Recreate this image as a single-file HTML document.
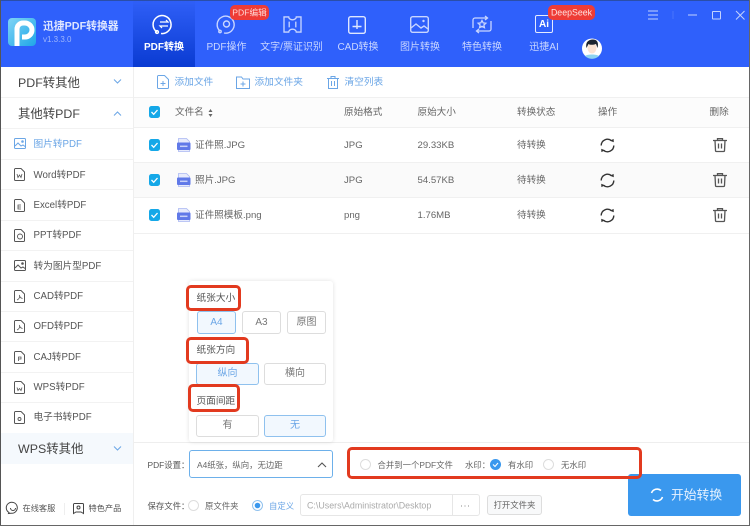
<!DOCTYPE html>
<html lang="zh"><head><meta charset="utf-8"><title>迅捷PDF转换器</title>
<style>
*{box-sizing:border-box;margin:0;padding:0}
html,body{width:750px;height:526px;overflow:hidden;background:#fff}
body{position:relative;font-family:"Liberation Sans","Noto Sans CJK SC",sans-serif;color:#555}
.a{position:absolute;white-space:nowrap}
.t{position:absolute;white-space:nowrap;transform:translate(0,calc(-50% + 1px));line-height:1}
.c{position:absolute;white-space:nowrap;transform:translate(-50%,calc(-50% + 1px));line-height:1}
svg{position:absolute;overflow:visible}
.nav{font-size:10px;color:#c9d6ff}
.side{font-size:9.7px;color:#555}
.group{font-size:12.4px;color:#444}
.th{font-size:9.6px;color:#666}
.td{font-size:9.6px;color:#666}
.sm{font-size:8.4px;color:#666}
.btn{position:absolute;border:1px solid #ddd;border-radius:3px;background:#fff;font-size:10px;line-height:1;color:#777;display:flex;align-items:center;justify-content:center}
.on{border-color:#8fc1ee;background:#f2f8fe;color:#6ba6e6}
.red{position:absolute;border:3px solid #e23a1f;border-radius:5px}
.hl{position:absolute;left:1px;width:132px;height:1px;background:#f2f2f2}
.rl{position:absolute;left:134px;width:616px;height:1px;background:#f0f0f0}
.radio{position:absolute;width:11px;height:11px;border:1px solid #ddd;border-radius:50%;background:#fff}
</style></head><body>

<!-- header -->
<div class="a" style="left:0;top:0;width:750px;height:67px;background:#2f60fb;border-top:1px solid #2a4ea8"></div>
<div class="a" style="left:133px;top:1px;width:62px;height:66px;background:linear-gradient(#2f5ff7,#0a3bd2)"></div>

<!-- logo -->
<div class="a" style="left:8px;top:18px;width:28px;height:28px;border-radius:4px;background:linear-gradient(135deg,#7fd4f5,#1fa6e8)"></div>
<svg style="left:8px;top:18px" width="28" height="28" viewBox="0 0 28 28"><path d="M9 28V11a6 6 0 0 1 6-6h2a7 7 0 0 1 0 14h-3" fill="none" stroke="#fff" stroke-width="5"/></svg>
<div class="t" style="left:43px;top:26px;font-size:10.8px;font-weight:bold;color:#dfe7ff">迅捷PDF转换器</div>
<div class="t" style="left:43px;top:39px;font-size:8px;color:#9fb6fb">v1.3.3.0</div>

<!-- nav icons -->
<svg style="left:154px;top:14px" width="20" height="21" viewBox="0 0 20 21" fill="none" stroke="#fff" stroke-width="1.500"><path d="M3 18a9 9 0 1 1 4 1.500"/><circle cx="3" cy="18" r="1.400"/><path d="M6 8h8l-2-2M14 12H6l2 2" stroke-width="1.200"/></svg>
<svg style="left:217px;top:15px" width="19" height="19" viewBox="0 0 19 19" fill="none" stroke="#c9d6ff" stroke-width="1.400"><path d="M3 16a8.500 8.500 0 1 1 4 2"/><circle cx="3" cy="16.500" r="1.200"/><circle cx="9.500" cy="9" r="3"/></svg>
<svg style="left:283px;top:16px" width="19" height="17" viewBox="0 0 20 18" fill="none" stroke="#c9d6ff" stroke-width="1.400"><path d="M1 1h5a4 3 0 0 0 8 0h5v16h-5a4 3 0 0 0-8 0H1z"/><path d="M6.500 6v6M13.500 6v6"/></svg>
<svg style="left:348px;top:16px" width="18" height="18" viewBox="0 0 18 18" fill="none" stroke="#dfe7ff" stroke-width="1.400"><rect x=".7" y=".7" width="16.600" height="16.600" rx="2"/><path d="M9 4v9M4.500 10.500h9"/></svg>
<svg style="left:410px;top:16px" width="19" height="17" viewBox="0 0 19 17" fill="none" stroke="#c9d6ff" stroke-width="1.400"><rect x=".7" y=".7" width="17.600" height="15.600" rx="2"/><path d="M1 12l5-4 5 4 3-2 4 3"/><circle cx="13.500" cy="5" r="1.200" fill="#c9d6ff" stroke="none"/></svg>
<svg style="left:472px;top:15px" width="20" height="19" viewBox="0 0 20 19" fill="none" stroke="#c9d6ff" stroke-width="1.300"><path d="M15 3H3a2 2 0 0 0-2 2v8M5 16h12a2 2 0 0 0 2-2V6M13 1l2.500 2L13 5M7 14l-2.500 2L7 18"/><path d="M10 5.500l1.200 2.400 2.600.3-1.900 1.800.5 2.600L10 11.300l-2.400 1.300.5-2.600-1.900-1.800 2.600-.3z"/></svg>
<div class="a" style="left:535px;top:15px;width:18px;height:18px;border:1.400px solid #e5ebff;border-radius:2px"></div>
<div class="c" style="left:544px;top:24px;font-size:10px;font-weight:bold;color:#fff">Ai</div>

<div class="c nav" style="left:164px;top:46.500px;color:#fff;font-weight:bold">PDF转换</div>
<div class="c nav" style="left:226.500px;top:46.500px">PDF操作</div>
<div class="c nav" style="left:291.500px;top:46.500px">文字/票证识别</div>
<div class="c nav" style="left:358px;top:46.500px">CAD转换</div>
<div class="c nav" style="left:420px;top:46.500px">图片转换</div>
<div class="c nav" style="left:482px;top:46.500px">特色转换</div>
<div class="c nav" style="left:544px;top:46.500px">迅捷AI</div>

<!-- badges -->
<div class="a" style="left:230px;top:5px;width:39px;height:15px;border-radius:5px;background:#ee3c36"></div>
<div class="c" style="left:249.500px;top:11.500px;font-size:8.600px;color:#ffd9d6">PDF编辑</div>
<div class="a" style="left:548px;top:5px;width:47px;height:15px;border-radius:5px;background:#ee3c36"></div>
<div class="c" style="left:571.500px;top:12px;font-size:8.800px;color:#ffe3e1">DeepSeek</div>

<!-- avatar -->
<svg style="left:581px;top:38px" width="22" height="21" viewBox="0 0 22 21"><circle cx="11" cy="10.500" r="10" fill="#fff"/><path d="M4 18c2-2 12-2 14 0a10 10 0 0 1-14 0z" fill="#8dd3f0"/><ellipse cx="11" cy="10" rx="4.500" ry="5.500" fill="#fbe3d3"/><path d="M5.500 10C4 3 9 1.500 12 1.500c4 0 6 3 4.500 8.500L15 6c-3 1-6 1-7.500 0z" fill="#1c2430"/></svg>

<!-- window controls -->
<svg style="left:648px;top:10px" width="100" height="20" viewBox="0 0 100 20" fill="none" stroke="#c3d2fd" stroke-width="1"><path d="M0 1h10M0 5h10M0 9h10"/><path d="M25 1v8" stroke="#4a75fb"/><path d="M40 5h9"/><rect x="64.500" y="1.500" width="8" height="7.500" rx=".5"/><path d="M88 1l8.500 8.500M96.500 1L88 9.500"/></svg>

<!-- sidebar -->
<div class="a" style="left:0;top:0;width:1px;height:526px;background:#555"></div>
<div class="a" style="left:133px;top:67px;width:1px;height:459px;background:#efefef"></div>
<div class="t group" style="left:18px;top:81.500px">PDF转其他</div>
<div class="t group" style="left:18px;top:112.500px">其他转PDF</div>
<svg style="left:113px;top:79px" width="10" height="5" viewBox="0 0 10 5" fill="none" stroke="#6ba6e6"><path d="M1 .5l3.500 3.500L8 .5"/></svg>
<svg style="left:113px;top:111px" width="10" height="5" viewBox="0 0 10 5" fill="none" stroke="#6ba6e6"><path d="M1 4.500L4.500 1 8 4.500"/></svg>
<div class="hl" style="top:97px"></div><div class="hl" style="top:128px"></div><div class="hl" style="top:159px"></div><div class="hl" style="top:189px"></div><div class="hl" style="top:220px"></div><div class="hl" style="top:250px"></div><div class="hl" style="top:281px"></div><div class="hl" style="top:311px"></div><div class="hl" style="top:341px"></div><div class="hl" style="top:372px"></div><div class="hl" style="top:402px"></div>

<div class="t side" style="left:33.500px;top:144px;color:#6ba6e6">图片转PDF</div>
<div class="t side" style="left:33.500px;top:174.500px">Word转PDF</div>
<div class="t side" style="left:33.500px;top:205px">Excel转PDF</div>
<div class="t side" style="left:33.500px;top:235px">PPT转PDF</div>
<div class="t side" style="left:33.500px;top:265.500px">转为图片型PDF</div>
<div class="t side" style="left:33.500px;top:296px">CAD转PDF</div>
<div class="t side" style="left:33.500px;top:326px">OFD转PDF</div>
<div class="t side" style="left:33.500px;top:356.500px">CAJ转PDF</div>
<div class="t side" style="left:33.500px;top:387px">WPS转PDF</div>
<div class="t side" style="left:33.500px;top:417px">电子书转PDF</div>

<svg style="left:14px;top:138px" width="12" height="11" viewBox="0 0 12 11" fill="none" stroke="#6ba6e6"><rect x=".5" y=".5" width="11" height="10" rx="1"/><path d="M1 8l3-3 3 3 2-1 2 1.500"/><circle cx="8.500" cy="3.500" r=".8" fill="#6ba6e6"/></svg>
<svg style="left:14px;top:168px" width="11" height="13" viewBox="0 0 11 13" fill="none" stroke="#555"><path d="M.5 1.500a1 1 0 0 1 1-1h5.500l3.500 3.500v7.500a1 1 0 0 1-1 1h-8a1 1 0 0 1-1-1z"/><path d="M3 6l1 3.500 1.500-2.500 1.500 2.500L8 6" stroke-width=".8"/></svg>
<svg style="left:14px;top:199px" width="11" height="13" viewBox="0 0 11 13" fill="none" stroke="#555"><path d="M.5 1.500a1 1 0 0 1 1-1h5.500l3.500 3.500v7.500a1 1 0 0 1-1 1h-8a1 1 0 0 1-1-1z"/><path d="M7 6H4v4h3M4 8h3" stroke-width=".8"/></svg>
<svg style="left:14px;top:229px" width="11" height="13" viewBox="0 0 11 13" fill="none" stroke="#555"><path d="M.5 1.500a1 1 0 0 1 1-1h5.500l3.500 3.500v7.500a1 1 0 0 1-1 1h-8a1 1 0 0 1-1-1z"/><circle cx="6" cy="7.500" r="2.500" stroke-width=".9"/></svg>
<svg style="left:14px;top:260px" width="12" height="11" viewBox="0 0 12 11" fill="none" stroke="#555"><rect x=".5" y=".5" width="11" height="10" rx="1"/><path d="M1 8l3-3 3 3 2-1 2 1.500"/><circle cx="8.500" cy="3.500" r=".8" fill="#555"/></svg>
<svg style="left:14px;top:290px" width="11" height="13" viewBox="0 0 11 13" fill="none" stroke="#555"><path d="M.5 1.500a1 1 0 0 1 1-1h5.500l3.500 3.500v7.500a1 1 0 0 1-1 1h-8a1 1 0 0 1-1-1z"/><path d="M3 10c2-1 3-3 2.500-5 0 2 1 3 3 3.500" stroke-width=".8"/></svg>
<svg style="left:14px;top:320px" width="11" height="13" viewBox="0 0 11 13" fill="none" stroke="#555"><path d="M.5 1.500a1 1 0 0 1 1-1h5.500l3.500 3.500v7.500a1 1 0 0 1-1 1h-8a1 1 0 0 1-1-1z"/><path d="M3 10c2-1 3-3 2.500-5 0 2 1 3 3 3.500" stroke-width=".8"/></svg>
<svg style="left:14px;top:351px" width="11" height="13" viewBox="0 0 11 13" fill="none" stroke="#555"><path d="M.5 1.500a1 1 0 0 1 1-1h5.500l3.500 3.500v7.500a1 1 0 0 1-1 1h-8a1 1 0 0 1-1-1z"/><path d="M4.500 10V6H7v2H4.500" stroke-width=".8"/></svg>
<svg style="left:14px;top:381px" width="11" height="13" viewBox="0 0 11 13" fill="none" stroke="#555"><path d="M.5 1.500a1 1 0 0 1 1-1h5.500l3.500 3.500v7.500a1 1 0 0 1-1 1h-8a1 1 0 0 1-1-1z"/><path d="M3 6.500l1 3 1.500-2 1.500 2 1-3" stroke-width=".8"/></svg>
<svg style="left:14px;top:411px" width="11" height="13" viewBox="0 0 11 13" fill="none" stroke="#555"><path d="M.5 1.500a1 1 0 0 1 1-1h5.500l3.500 3.500v7.500a1 1 0 0 1-1 1h-8a1 1 0 0 1-1-1z"/><circle cx="5.500" cy="8" r="1.500" stroke-width=".9"/></svg>

<div class="a" style="left:1px;top:433px;width:132px;height:31px;background:#f5f9fd"></div>
<div class="t group" style="left:18px;top:447.500px">WPS转其他</div>
<svg style="left:113px;top:446px" width="10" height="5" viewBox="0 0 10 5" fill="none" stroke="#6ba6e6"><path d="M1 .5l3.500 3.500L8 .5"/></svg>

<svg style="left:7px;top:502px" width="12" height="12" viewBox="0 0 12 12" fill="none" stroke="#444"><path d="M2 10.500A5.500 5.500 0 1 1 4 11.200L1.500 11.500z"/><path d="M3.500 6a2.500 2.500 0 0 0 5 0"/></svg>
<div class="t" style="left:22.500px;top:508px;font-size:8.200px;color:#555">在线客服</div>
<div class="a" style="left:64px;top:503px;width:1px;height:12px;background:#eee"></div>
<svg style="left:73px;top:503px" width="11" height="11" viewBox="0 0 11 11" fill="none" stroke="#444"><path d="M.5 1.500a1 1 0 0 1 1-1h8a1 1 0 0 1 1 1v9L8 9H3L.5 10.500z"/><circle cx="5.500" cy="4.500" r="1.500"/></svg>
<div class="t" style="left:88.500px;top:508px;font-size:8.200px;color:#555">特色产品</div>

<!-- toolbar -->
<svg style="left:157px;top:75px" width="12" height="14" viewBox="0 0 12 14" fill="none" stroke="#6ba6e6"><path d="M.5 1.500a1 1 0 0 1 1-1h6l4 4v8a1 1 0 0 1-1 1h-9a1 1 0 0 1-1-1z"/><path d="M6 6v5M3.500 8.500h5"/></svg>
<div class="t" style="left:174.500px;top:81.500px;font-size:9.700px;color:#6ba6e6">添加文件</div>
<svg style="left:236px;top:76px" width="14" height="13" viewBox="0 0 14 13" fill="none" stroke="#6ba6e6"><path d="M.5 1h5l1.500 2h6.500v9.500H.5z"/><path d="M7 5.500v5M4.500 8h5"/></svg>
<div class="t" style="left:254.500px;top:81.500px;font-size:9.700px;color:#6ba6e6">添加文件夹</div>
<svg style="left:327px;top:76px" width="12" height="13" viewBox="0 0 12 13" fill="none" stroke="#6ba6e6"><path d="M0 2.500h12M4 2.500V.5h4v2M1.500 2.500V12.500h9V2.500M4.500 5v5M7.500 5v5"/></svg>
<div class="t" style="left:344.500px;top:81.500px;font-size:9.700px;color:#6ba6e6">清空列表</div>

<!-- table header -->
<div class="a" style="left:134px;top:97px;width:616px;height:31px;background:#fcfcfc;border-top:1px solid #f0f0f0;border-bottom:1px solid #f0f0f0"></div>
<div class="a" style="left:134px;top:163px;width:616px;height:35px;background:#fafafa"></div>
<div class="rl" style="top:162px"></div><div class="rl" style="top:197px"></div><div class="rl" style="top:233px"></div>

<div class="t th" style="left:175px;top:111.500px">文件名</div>
<svg style="left:208px;top:109px" width="5" height="8" viewBox="0 0 5 8" fill="#666"><path d="M2.500 0l2 3H.5zM2.500 8l2-3H.5z"/></svg>
<div class="t th" style="left:344px;top:111.500px">原始格式</div>
<div class="t th" style="left:417.500px;top:111.500px">原始大小</div>
<div class="t th" style="left:517px;top:111.500px">转换状态</div>
<div class="t th" style="left:598px;top:111.500px">操作</div>
<div class="t th" style="left:709.500px;top:111.500px">删除</div>

<!-- checkboxes -->
<svg style="left:149px;top:106px" width="11" height="12" viewBox="0 0 11 12"><rect width="11" height="12" rx="2.500" fill="#15a8e8"/><path d="M2.500 6l2.200 2.300L8.500 4" fill="none" stroke="#fff" stroke-width="1.300"/></svg>
<svg style="left:149px;top:139px" width="11" height="12" viewBox="0 0 11 12"><rect width="11" height="12" rx="2.500" fill="#15a8e8"/><path d="M2.500 6l2.200 2.300L8.500 4" fill="none" stroke="#fff" stroke-width="1.300"/></svg>
<svg style="left:149px;top:174px" width="11" height="12" viewBox="0 0 11 12"><rect width="11" height="12" rx="2.500" fill="#15a8e8"/><path d="M2.500 6l2.200 2.300L8.500 4" fill="none" stroke="#fff" stroke-width="1.300"/></svg>
<svg style="left:149px;top:209px" width="11" height="12" viewBox="0 0 11 12"><rect width="11" height="12" rx="2.500" fill="#15a8e8"/><path d="M2.500 6l2.200 2.300L8.500 4" fill="none" stroke="#fff" stroke-width="1.300"/></svg>

<!-- file icons -->
<svg style="left:177px;top:138px" width="14" height="14" viewBox="0 0 14 14"><path d="M1.500 .5h8l3 3v10h-11z" fill="#e7ebfc" stroke="#aab8f2" stroke-width=".8"/><rect y="4.500" width="13.500" height="7.500" rx="1" fill="#6079e8"/><path d="M3 8.300h7.500" stroke="#c8d1f8" stroke-width="1.500"/></svg>
<svg style="left:177px;top:173px" width="14" height="14" viewBox="0 0 14 14"><path d="M1.500 .5h8l3 3v10h-11z" fill="#e7ebfc" stroke="#aab8f2" stroke-width=".8"/><rect y="4.500" width="13.500" height="7.500" rx="1" fill="#6079e8"/><path d="M3 8.300h7.500" stroke="#c8d1f8" stroke-width="1.500"/></svg>
<svg style="left:177px;top:208px" width="14" height="14" viewBox="0 0 14 14"><path d="M1.500 .5h8l3 3v10h-11z" fill="#e7ebfc" stroke="#aab8f2" stroke-width=".8"/><rect y="4.500" width="13.500" height="7.500" rx="1" fill="#6079e8"/><path d="M3 8.300h7.500" stroke="#c8d1f8" stroke-width="1.500"/></svg>

<!-- rows -->
<div class="t td" style="left:195px;top:144.500px">证件照.JPG</div>
<div class="t td" style="left:344px;top:144.500px">JPG</div>
<div class="t td" style="left:417.500px;top:144.500px">29.33KB</div>
<div class="t td" style="left:517px;top:144.500px">待转换</div>
<div class="t td" style="left:195px;top:179.500px">照片.JPG</div>
<div class="t td" style="left:344px;top:179.500px">JPG</div>
<div class="t td" style="left:417.500px;top:179.500px">54.57KB</div>
<div class="t td" style="left:517px;top:179.500px">待转换</div>
<div class="t td" style="left:195px;top:214.500px">证件照模板.png</div>
<div class="t td" style="left:344px;top:214.500px">png</div>
<div class="t td" style="left:417.500px;top:214.500px">1.76MB</div>
<div class="t td" style="left:517px;top:214.500px">待转换</div>

<!-- row actions -->
<svg style="left:600px;top:138px" width="15" height="15" viewBox="0 0 15 15" fill="none" stroke="#333" stroke-width="1.400"><path d="M1.200 7.500A6.300 6.300 0 0 1 11.500 2.700"/><path d="M13.800 7.500A6.300 6.300 0 0 1 3.500 12.300"/><path d="M13.800 4.200L13.600 .9 10 2.800z" fill="#333" stroke="none"/><path d="M1.200 10.800l.2 3.300 3.600-1.900z" fill="#333" stroke="none"/></svg>
<svg style="left:600px;top:173px" width="15" height="15" viewBox="0 0 15 15" fill="none" stroke="#333" stroke-width="1.400"><path d="M1.200 7.500A6.300 6.300 0 0 1 11.500 2.700"/><path d="M13.800 7.500A6.300 6.300 0 0 1 3.500 12.300"/><path d="M13.800 4.200L13.600 .9 10 2.800z" fill="#333" stroke="none"/><path d="M1.200 10.800l.2 3.300 3.600-1.900z" fill="#333" stroke="none"/></svg>
<svg style="left:600px;top:208px" width="15" height="15" viewBox="0 0 15 15" fill="none" stroke="#333" stroke-width="1.400"><path d="M1.200 7.500A6.300 6.300 0 0 1 11.500 2.700"/><path d="M13.800 7.500A6.300 6.300 0 0 1 3.500 12.300"/><path d="M13.800 4.200L13.600 .9 10 2.800z" fill="#333" stroke="none"/><path d="M1.200 10.800l.2 3.300 3.600-1.900z" fill="#333" stroke="none"/></svg>
<svg style="left:713px;top:138px" width="14" height="14" viewBox="0 0 14 14" fill="none" stroke="#555" stroke-width="1.300"><path d="M0 2.500h14M4.500 2.500V.7h5v1.800M2 2.500l.5 10a1 1 0 0 0 1 1h7a1 1 0 0 0 1-1l.5-10M5.500 5.500v5M8.500 5.500v5"/></svg>
<svg style="left:713px;top:173px" width="14" height="14" viewBox="0 0 14 14" fill="none" stroke="#555" stroke-width="1.300"><path d="M0 2.500h14M4.500 2.500V.7h5v1.800M2 2.500l.5 10a1 1 0 0 0 1 1h7a1 1 0 0 0 1-1l.5-10M5.500 5.500v5M8.500 5.500v5"/></svg>
<svg style="left:713px;top:208px" width="14" height="14" viewBox="0 0 14 14" fill="none" stroke="#555" stroke-width="1.300"><path d="M0 2.500h14M4.500 2.500V.7h5v1.800M2 2.500l.5 10a1 1 0 0 0 1 1h7a1 1 0 0 0 1-1l.5-10M5.500 5.500v5M8.500 5.500v5"/></svg>

<!-- bottom divider -->
<div class="a" style="left:134px;top:442px;width:616px;height:1px;background:#eee"></div>

<!-- popup -->
<div class="a" style="left:189px;top:281px;width:144px;height:161px;background:#fff;border-radius:3px;box-shadow:0 0 5px rgba(0,0,0,.12)"></div>
<div class="t" style="left:196.500px;top:298px;font-size:9.700px;color:#555">纸张大小</div>
<div class="btn on" style="left:197px;top:311px;width:39px;height:23px">A4</div>
<div class="btn" style="left:242px;top:311px;width:39px;height:23px">A3</div>
<div class="btn" style="left:287px;top:311px;width:39px;height:23px">原图</div>
<div class="t" style="left:196.500px;top:350px;font-size:9.700px;color:#555">纸张方向</div>
<div class="btn on" style="left:196px;top:363px;width:63px;height:22px">纵向</div>
<div class="btn" style="left:264px;top:363px;width:62px;height:22px">横向</div>
<div class="t" style="left:196.500px;top:401px;font-size:9.700px;color:#555">页面间距</div>
<div class="btn" style="left:196px;top:415px;width:63px;height:22px">有</div>
<div class="btn on" style="left:264px;top:415px;width:62px;height:22px">无</div>

<div class="red" style="left:186px;top:285px;width:55px;height:26px"></div>
<div class="red" style="left:186px;top:337px;width:63px;height:27px"></div>
<div class="red" style="left:188px;top:384px;width:52px;height:28px"></div>

<!-- PDF settings -->
<div class="t sm" style="left:147.500px;top:464px;color:#555">PDF设置：</div>
<div class="a" style="left:189px;top:450px;width:144px;height:28px;border:1px solid #6db0ea;border-radius:3px;background:#fff"></div>
<div class="t sm" style="left:197px;top:464px">A4纸张，纵向，无边距</div>
<svg style="left:317px;top:462px" width="10" height="6" viewBox="0 0 10 6" fill="none" stroke="#555" stroke-width="1.100"><path d="M1 5l4-4 4 4"/></svg>

<div class="radio" style="left:360px;top:459px"></div>
<div class="t sm" style="left:377.500px;top:464px">合并到一个PDF文件</div>
<div class="t sm" style="left:465px;top:464px">水印：</div>
<svg style="left:489.500px;top:459px" width="11" height="11" viewBox="0 0 11 11"><circle cx="5.500" cy="5.500" r="5.500" fill="#3a98ee"/><path d="M3 5.500l2 2 3-3.500" fill="none" stroke="#fff" stroke-width="1.100"/></svg>
<div class="t sm" style="left:508px;top:464px">有水印</div>
<div class="radio" style="left:543px;top:459px"></div>
<div class="t sm" style="left:561px;top:464px">无水印</div>

<!-- save row -->
<div class="t sm" style="left:147.500px;top:504.500px;color:#555">保存文件：</div>
<div class="radio" style="left:188px;top:500px"></div>
<div class="t sm" style="left:205px;top:504.500px">原文件夹</div>
<svg style="left:252px;top:500px" width="11" height="11" viewBox="0 0 11 11"><circle cx="5.500" cy="5.500" r="5" fill="#fff" stroke="#8fc1ee"/><circle cx="5.500" cy="5.500" r="2.800" fill="#3a98ee"/></svg>
<div class="t sm" style="left:269px;top:504.500px;color:#6ba6e6">自定义</div>
<div class="a" style="left:300px;top:494px;width:180px;height:22px;border:1px solid #e6e6e6;border-radius:3px"></div>
<div class="a" style="left:452px;top:494px;width:1px;height:22px;background:#e6e6e6"></div>
<div class="t" style="left:307px;top:504.500px;font-size:8.900px;color:#aaa">C:\Users\Administrator\Desktop</div>
<div class="c" style="left:465.500px;top:503px;font-size:9px;color:#777;letter-spacing:1px">...</div>
<div class="btn" style="left:487px;top:495px;width:55px;height:20px;font-size:8.400px;background:#f8f9fa;color:#666">打开文件夹</div>

<!-- start button -->
<div class="a" style="left:628px;top:474px;width:113px;height:42px;background:#3a98ee;border-radius:3px"></div>
<svg style="left:650px;top:488px" width="14" height="14" viewBox="0 0 14 14" fill="none" stroke="#fff" stroke-width="1.600"><path d="M1.500 5a6 6 0 0 1 9.500-2.500M12.500 9a6 6 0 0 1-9.500 2.500"/></svg>
<div class="t" style="left:671px;top:494.500px;font-size:12.800px;color:#e8f3ff">开始转换</div>

<div class="red" style="left:347px;top:447px;width:295px;height:32px"></div>

<!-- window frame -->
<div class="a" style="left:0;top:525px;width:750px;height:1px;background:#666"></div>
<div class="a" style="left:749px;top:0;width:1px;height:526px;background:#666"></div>
</body></html>
